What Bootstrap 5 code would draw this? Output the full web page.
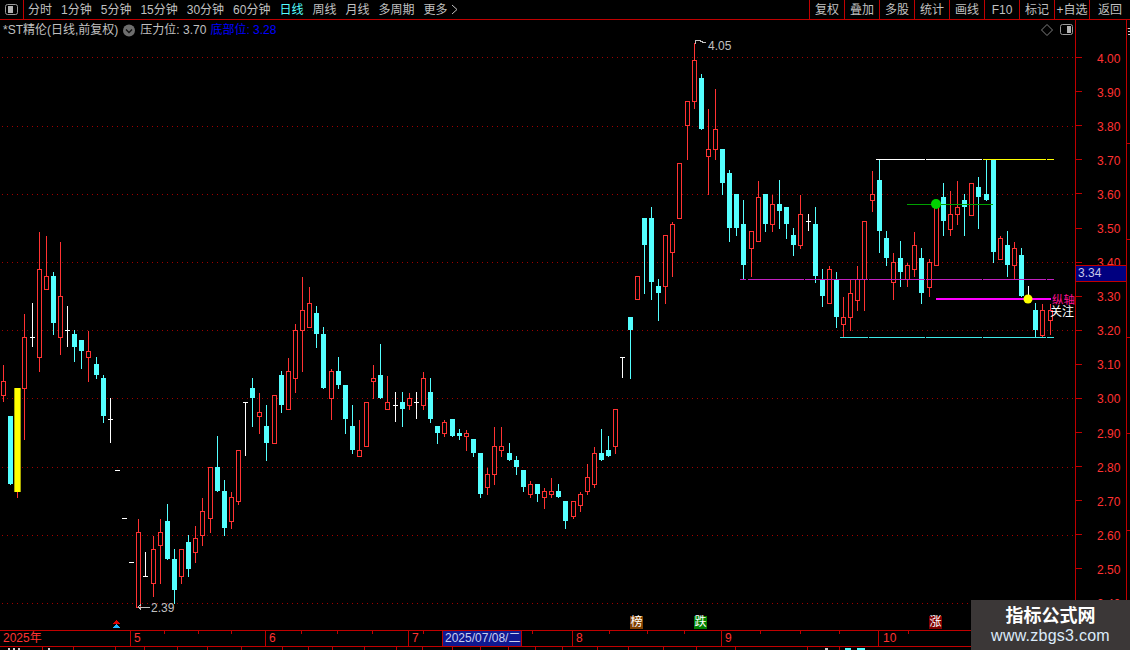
<!DOCTYPE html>
<html lang="zh">
<head>
<meta charset="utf-8">
<title>ST精伦 日线</title>
<link href="https://cdn.jsdelivr.net/npm/bootstrap@5.3.0/dist/css/bootstrap.min.css" rel="stylesheet">
<style>
html,body{height:100%;margin:0;background:#000;overflow:hidden}
body{font:12px/1 "Liberation Sans","Noto Sans CJK SC",sans-serif;color:#c0c0c0}
.kl-app{width:1130px;height:650px}
.kl-bar{height:20px;border-bottom:1px solid #c00000;flex:none}
.kl-ico{width:24px;border-right:1px solid #c00000}
.kl-periods{column-gap:9px;padding-left:4px;line-height:20px}
.kl-periods .kl-on{color:#54ffff}
.kl-more{margin-left:-6px}
.kl-tool{width:35px;border:0;border-left:1px solid #c00000;border-radius:0;padding:0;color:#c0c0c0;background:none;font-size:12px;line-height:20px;height:19px;text-align:center}
.kl-tool:hover{color:#fff;background:none}
.kl-tool-last{width:41px}
.kl-main{height:610px;flex:none}
.kl-chart{width:1075px}
.kl-chart svg{display:block}
.kl-legend{top:4px;left:3px;line-height:13px;white-space:nowrap}
.kl-legend .kl-low{color:#0000ff}
.kl-axis{width:51px;border-left:1px solid #c00000;padding-top:20px;color:#ff3232;flex:none}
.kl-ylab{height:34.1px;line-height:34.1px;padding-left:21px}
.kl-ytext{position:relative;top:1.500px}
.kl-ylab::before{content:"";position:absolute;left:0;top:50%;width:6px;height:1px;background:#c00000}
.kl-tag{left:0;top:245px;width:50px;height:17px;background:#000080;border:solid #c00000;border-width:1px 0;color:#c8c8e8;line-height:15px;padding-left:2px}
.kl-side{width:4px;border-left:1px solid #c00000;flex:none}
.kl-time{height:17px;flex:none;border-top:1px solid #c00000;border-bottom:1px solid #c00000;color:#ff3232;line-height:15px}
.kl-cell{padding-left:3px;border-right:1px solid #c00000}
.kl-cell:nth-child(1){width:131px}
.kl-cell:nth-child(2){width:135px}
.kl-cell:nth-child(3){width:143px}
.kl-cell:nth-child(4){width:164px}
.kl-cell:nth-child(5){width:149px}
.kl-cell:nth-child(6){width:157px}
.kl-date{left:443px;top:0;width:78px;height:15px;background:#101890;color:#c8d0f0;padding-left:2px;outline:1px solid #c00000}
.kl-foot{height:3px;flex:none;display:block}
.kl-pin{top:596px;width:13px;height:13px;color:#fff;font-size:12px;line-height:13px;text-align:center}
.kl-pin-bang{left:630px;background:#804000}
.kl-pin-die{left:694px;background:#008000}
.kl-pin-zhang{left:929px;background:#800000}
.kl-mark{left:971px;top:600px;width:159px;height:50px;background:#3b3737;text-align:center}
.kl-mark-a{font-size:18px;font-weight:700;color:#fff;line-height:22px;padding-top:5px}
.kl-mark-b{font-size:16px;color:#dcebfa;line-height:18px;letter-spacing:.25px}
svg text{font-family:"Liberation Sans","Noto Sans CJK SC",sans-serif;font-size:12px}
</style>
</head>
<body>
<div class="kl-app d-flex flex-column position-relative overflow-hidden">

  <div class="kl-bar d-flex">
    <div class="kl-ico flex-shrink-0">
      <svg width="23" height="19" aria-hidden="true"><rect x="5.500" y="4.500" width="12" height="10" rx="2" fill="#000" stroke="#9a9a9a"/><rect x="8" y="6" width="5" height="7" fill="#b4b4b4"/></svg>
    </div>
    <div class="kl-periods d-flex">
      <span>分时</span><span>1分钟</span><span>5分钟</span><span>15分钟</span><span>30分钟</span><span>60分钟</span><span class="kl-on">日线</span><span>周线</span><span>月线</span><span>多周期</span><span>更多</span>
      <svg width="8" height="19" class="kl-more" aria-hidden="true"><path d="M1 5l5 4.500-5 4.500" fill="none" stroke="#c0c0c0"/></svg>
    </div>
    <div class="ms-auto d-flex">
      <button class="btn kl-tool">复权</button><button class="btn kl-tool">叠加</button><button class="btn kl-tool">多股</button><button class="btn kl-tool">统计</button><button class="btn kl-tool">画线</button><button class="btn kl-tool">F10</button><button class="btn kl-tool">标记</button><button class="btn kl-tool">+自选</button><button class="btn kl-tool kl-tool-last">返回</button>
    </div>
  </div>

  <div class="kl-main d-flex">
    <div class="kl-chart position-relative overflow-hidden flex-shrink-0">
      <svg id="kl-svg" width="1075" height="610" viewBox="0 20 1075 610" shape-rendering="crispEdges"></svg>
      <div class="kl-legend position-absolute d-flex align-items-center">
        <span>*ST精伦(日线,前复权)</span>
        <svg class="mx-1" width="14" height="13" aria-hidden="true"><circle cx="7" cy="6.500" r="6" fill="#6e6e6e"/><path d="M4 5.500l3 3 3-3" fill="none" stroke="#111" stroke-width="1.400"/></svg>
        <span>压力位: 3.70</span>
        <span class="kl-low ms-1">底部位: 3.28</span>
      </div>
      <svg class="position-absolute top-0 start-0" width="1075" height="20" aria-hidden="true">
        <path d="M1047 4.500l5.500 5.500-5.500 5.500-5.500-5.500z" fill="none" stroke="#808080"/>
        <rect x="1060.500" y="4.500" width="12" height="10" rx="2" fill="#000" stroke="#9a9a9a"/><rect x="1067" y="6" width="4" height="7" fill="#b4b4b4"/>
      </svg>
      <span class="kl-pin kl-pin-bang position-absolute">榜</span>
      <span class="kl-pin kl-pin-die position-absolute">跌</span>
      <span class="kl-pin kl-pin-zhang position-absolute">涨</span>
    </div>
    <div class="kl-axis position-relative" id="kl-axis">
      <div class="kl-tag position-absolute">3.34</div>
    </div>
    <div class="kl-side">
      <svg id="kl-side" width="3" height="610" aria-hidden="true" shape-rendering="crispEdges"></svg>
    </div>
  </div>

  <div class="kl-time position-relative d-flex">
    <div class="kl-cell">2025年</div><div class="kl-cell">5</div><div class="kl-cell">6</div><div class="kl-cell">7</div><div class="kl-cell">8</div><div class="kl-cell">9</div><div class="ps-1">10</div>
    <div class="kl-date position-absolute">2025/07/08/二</div>
    <svg id="kl-ticks" class="position-absolute top-0 start-0" width="971" height="3" aria-hidden="true" shape-rendering="crispEdges"></svg>
  </div>
  <svg id="kl-foot" class="kl-foot" width="1130" height="3" aria-hidden="true" shape-rendering="crispEdges"></svg>

  <div class="kl-mark position-absolute">
    <div class="kl-mark-a">指标公式网</div>
    <div class="kl-mark-b">www.zbgs3.com</div>
  </div>
</div>

<script>
var RED='#ff3232',CY='#54ffff',WH='#ffffff';
var D=[
[3,'r',365,381,395,401],[10,'c',0,416,484,0],[24,'r',314,337,388,439],[32,'w',303,337,337,347],
[39,'r',232,269,357,371],[46,'r',236,276,289,0],[53,'c',272,276,323,334],[60,'r',242,296,337,354],
[67,'w',306,330,330,347],[74,'c',330,334,347,361],[81,'c',0,340,351,368],[88,'r',331,351,357,381],
[96,'c',357,364,375,378],[103,'c',375,378,416,422],[110,'w',398,419,419,443],[117,'w',0,470,470,0],
[124,'w',0,518,518,0],[131,'w',0,562,562,0],[138,'r',519,532,607,0],[145,'w',552,576,576,577],
[153,'r',536,549,583,596],[160,'r',519,532,545,583],[167,'c',504,521,559,0],[174,'c',549,559,590,603],
[181,'r',0,549,576,583],[188,'c',535,542,569,576],[195,'r',526,538,552,562],[202,'r',498,511,535,545],
[210,'r',0,467,518,532],[217,'c',436,467,491,0],[224,'c',480,491,528,535],[231,'r',492,497,521,528],
[238,'r',0,450,501,504],[245,'w',402,402,402,456],[252,'c',378,388,398,426],[259,'r',393,412,416,433],
[266,'c',405,426,443,460],[274,'r',0,395,443,0],[281,'c',371,375,405,412],
[288,'r',358,371,409,0],[295,'r',324,330,378,392],[302,'r',277,310,330,371],[309,'r',287,303,327,0],
[316,'c',306,313,334,347],[323,'c',327,334,388,0],[331,'r',369,371,398,419],[338,'c',357,371,385,388],
[345,'c',0,385,419,433],[352,'c',405,426,450,453],[359,'r',420,450,456,0],[366,'r',0,402,446,0],
[373,'r',365,378,381,398],[380,'c',344,375,398,0],[387,'r',376,402,409,0],[395,'w',392,405,405,422],
[402,'c',392,402,409,426],[409,'r',393,398,405,409],[416,'w',392,402,402,419],[423,'r',372,378,405,409],
[430,'c',378,392,419,422],[437,'c',0,426,433,443],[444,'r',420,422,433,436],[452,'c',0,419,436,0],
[459,'c',429,433,436,439],[466,'r',430,433,436,450],[473,'c',0,439,453,456],[480,'c',0,453,494,497],
[487,'r',468,474,487,494],[494,'r',427,446,474,484],[501,'r',427,446,450,456],[509,'c',443,453,460,0],
[516,'c',456,460,467,474],[523,'c',0,470,487,491],[530,'r',481,484,494,497],[537,'c',0,484,494,501],
[544,'r',488,491,497,508],[551,'r',478,491,494,497],[558,'c',484,491,497,0],[565,'c',0,501,521,528],
[573,'r',0,501,516,518],[580,'r',492,494,505,511],[587,'r',464,477,491,494],[594,'r',447,453,484,487],
[601,'c',429,453,460,0],[608,'c',436,450,456,0],[615,'r',0,409,446,453],
[622,'w',357,357,377,378],[630,'c',0,317,330,378],[637,'r',0,276,299,0],[644,'c',0,218,245,293],
[651,'c',207,218,282,299],[658,'c',279,286,293,320],[665,'r',0,235,286,303],[672,'r',222,224,252,276],
[679,'r',0,163,218,0],[687,'r',0,101,125,159],[694,'r',43,60,101,108],[701,'c',74,78,129,0],
[708,'r',109,149,156,194],[715,'r',89,129,149,159],[722,'c',0,149,183,194],[729,'c',170,173,228,241],
[736,'c',0,194,228,235],[743,'c',200,224,265,279],[751,'r',0,231,248,276],[758,'r',181,197,241,0],
[765,'c',0,194,224,231],[772,'r',195,204,224,231],[779,'c',180,204,211,228],[786,'c',0,207,224,238],
[793,'c',228,235,245,255],[800,'r',195,214,245,248],[808,'w',214,221,221,231],[815,'c',207,224,276,282],
[822,'c',269,280,296,306],[829,'r',266,269,303,0],[836,'c',272,280,317,327],[843,'r',297,317,324,337],
[850,'r',279,293,317,330],[857,'r',266,279,300,310],[864,'r',0,221,279,310],[872,'r',171,194,200,211],
[879,'c',160,180,231,252],[886,'c',231,238,258,265],[893,'r',253,262,282,299],[900,'c',241,258,272,286],
[907,'r',263,265,279,286],[914,'r',232,245,269,276],[921,'c',248,258,293,303],[929,'r',259,262,287,296],
[936,'r',0,206,265,0],[943,'c',183,197,221,235],[950,'r',191,214,229,235],[957,'r',181,207,214,224],
[964,'c',194,200,207,235],[971,'r',0,183,215,0],[978,'c',177,187,197,228],[986,'c',160,194,200,0],
[993,'c',0,160,252,262],[1000,'r',236,238,259,0],[1007,'c',231,245,265,276],[1014,'r',242,248,265,279],
[1021,'c',248,255,296,0],[1028,'w',286,297,297,298],[1035,'c',303,310,330,337],[1042,'r',304,310,335,337],
[1050,'r',304,310,320,334]
];
function R(x,y,w,h,f){return '<rect x="'+x+'" y="'+y+'" width="'+w+'" height="'+h+'" fill="'+f+'"/>'}
function segs(y,h,c,xs){var s='';for(var i=0;i+1<xs.length;i+=2)s+=R(xs[i],y,xs[i+1]-xs[i],h,c);return s}
var s='';
/* dotted price grid */
var dots='';
for(var g=0;g<9;g++){var gy=Math.round(57.3+68.2*g);
  for(var gx=2;gx<1075;gx+=5)dots+='M'+gx+' '+gy+'h1v1h-1z';}
s+='<path d="'+dots+'" fill="#a00000"/>';
/* candles: wick, then a solid or hollow 5px body */
D.forEach(function(d){var x=d[0],t=d[1],c=t=='r'?RED:t=='c'?CY:WH,hi=d[2],top=d[3],bot=d[4],lo=d[5];
  var a=hi||top,b=lo||bot;
  if(t=='w'){s+=R(x,a,1,Math.max(b-a,1),c);s+=R(x-2,top,5,1,c);return;}
  s+=R(x,a,1,b-a+1,c);
  if(t=='c')s+=R(x-2,top,5,bot-top,c);
  else s+=R(x-2,top,5,bot-top+1,RED)+R(x-1,top+1,3,bot-top-1,'#000');
});
/* highlighted yellow candle */
s+=R(17,488,1,10,RED)+R(14,388,7,104,'#a8a800')+R(15,388,5,104,'#ffff00');
/* level lines */
s+=segs(159,1,'#ffffff',[876,925,926,982])+segs(159,1,'#ffff00',[983,1046,1047,1054]);
s+=segs(279,1,'#c020c0',[740,746,748,804,805,868,869,925,926,982,983,1046,1047,1054]);
s+=segs(337,1,'#40e8e8',[840,868,869,925,926,982,983,1046,1047,1054]);
s+=R(936,298,115,2,'#ff00ff');
s+=R(907,204,86,1,'#00a000');
s+='<circle cx="936" cy="204" r="5" fill="#00d000" shape-rendering="auto"/><circle cx="1028" cy="299" r="4.5" fill="#ffff00" shape-rendering="auto"/>';
/* extreme markers */
s+='<path d="M695 44V40h4M699 41c2-1 3 2 7 2" fill="none" stroke="#c0c0c0"/>';
s+='<text x="708" y="50" fill="#c0c0c0">4.05</text>';
s+='<path d="M150 607H138M138 607l3-2.500M138 607l3 2.500" fill="none" stroke="#c0c0c0"/>';
s+='<text x="151" y="612" fill="#c0c0c0">2.39</text>';
/* side labels */
s+='<text x="1052" y="304" fill="#ff1090" style="font-size:11.5px">纵轴</text><text x="1050" y="316" fill="#ffffff">关注</text>';
/* signal icon */
s+='<path d="M113 624l3.500-4 3.500 4z" fill="#e00000"/><path d="M113 628l3.500-4 3.500 4z" fill="#20b8ff"/>';
document.getElementById('kl-svg').innerHTML=s;

/* price axis labels */
var ax=document.getElementById('kl-axis'),tag=ax.querySelector('.kl-tag');
['4.00','3.90','3.80','3.70','3.60','3.50','3.40','3.30','3.20','3.10','3.00','2.90','2.80','2.70','2.60','2.50','2.40'].forEach(function(v){
  var e=document.createElement('div');e.className='kl-ylab position-relative';
  var i=document.createElement('span');i.className='kl-ytext';i.textContent=v;e.appendChild(i);
  ax.insertBefore(e,tag);
});

/* side strip and tick marks */
var t='';[28,143,239,337,433,530].forEach(function(y){t+=R(0,y-20,3,1,'#c00000')});
[28,31,34].forEach(function(y){t+=R(1,y-20,2,1,'#d0d0d0')});
document.getElementById('kl-side').innerHTML=t;
t='';[164,198,231,301,337,372,423,532,609,647,684,760,800,839,908].forEach(function(x){t+=R(x,0,1,3,'#c00000')});
document.getElementById('kl-ticks').innerHTML=t;
t='';[42,73,115,144,177,207,241,282,308,332,364,396,422,452,480,508,535,562,597,628,663,696,735,807,839].forEach(function(x){t+=R(x,0,1,3,'#c00000')});
[[8,2],[13,2],[18,2],[48,2],[825,3],[845,6],[857,8]].forEach(function(p){t+=R(p[0],1,p[1],2,p[0]>840?'#54ffff':'#d0d0d0')});
document.getElementById('kl-foot').innerHTML=t;
</script>
<script src="https://cdn.jsdelivr.net/npm/bootstrap@5.3.0/dist/js/bootstrap.bundle.min.js"></script>
</body>
</html>
